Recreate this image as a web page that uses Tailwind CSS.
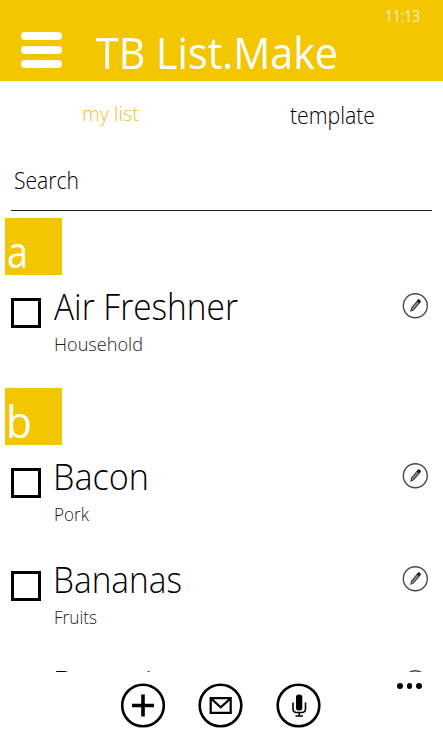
<!DOCTYPE html>
<html lang="en"><head><meta charset="utf-8"><title>TB List.Make</title>
<script src="https://cdn.jsdelivr.net/npm/@tailwindcss/browser@4"></script></head>
<body class="w-[443px] h-[738px] overflow-hidden bg-white text-black font-['Open_Sans',sans-serif] font-light">
<svg class="hidden"><symbol id="edit" viewBox="0 0 26 26"><circle cx="13.300" cy="12.800" r="12" fill="none" stroke="#4a4a4a" stroke-width="1.4"/><path d="M9 18 9.600 15 15.800 7.500 17.800 9.200 11.600 16.700z" fill="#999" stroke="#444" stroke-width="1.2"/><path d="m15.100 8.200 1.600-1.800 2 1.700-1.500 1.800z" fill="#222" stroke="#222"/></symbol></svg>
<div class="flex h-full flex-col">
<header class="h-[81px] shrink-0 bg-[#f2c600] text-white">
<div class="flex h-8 justify-end pr-[23px] text-[17px] leading-8 font-normal text-white/75"><span class="block w-[35px] whitespace-nowrap"><span data-w="35" class="inline-block origin-left">11:13</span></span></div>
<div class="flex items-start pl-[21px]">
<div class="flex w-[75px] shrink-0 flex-col gap-[6px]"><i class="block h-2 w-[41px] rounded-full bg-white"></i><i class="block h-2 w-[41px] rounded-full bg-white"></i><i class="block h-2 w-[41px] rounded-full bg-white"></i></div>
<h1 class="-mt-[1px] h-[42px] whitespace-nowrap text-[44px] leading-[42px] font-normal"><span data-w="242" class="inline-block origin-left">TB List.Make</span></h1></div>
</header>
<nav class="flex h-[68px] shrink-0 whitespace-nowrap leading-[66px]"><div class="w-[290px] pl-[82px] text-[20px] text-[#ecc51c]"><span data-w="57" class="inline-block origin-left">my list</span></div><div class="text-[23px] leading-[68px]"><span data-w="85" class="inline-block origin-left">template</span></div></nav>
<div class="mx-[11px] h-[62px] shrink-0 border-b border-[#222] pl-[3px] text-[23px] leading-[63px]"><span data-w="65" class="inline-block origin-left">Search</span></div>
<main class="min-h-0 h-[461px] shrink-0 overflow-hidden pt-[7px]">
<h2 class="ml-[5px] h-[57px] w-[57px] bg-[#f2c600] pl-[2px] pt-[4px] text-[43px] leading-[60px] font-normal text-white"><span data-w="21" class="inline-block origin-left">a</span></h2>
<article class="flex h-[113px] pl-[11px] pt-[23px]"><div class="h-[30px] w-[30px] shrink-0 border-3 border-black"></div><div class="-mt-[12px] ml-[13px] w-[348px] whitespace-nowrap"><h3 class="h-[42px] text-[37px] leading-[39px]"><span data-w="184" class="inline-block origin-left">Air Freshner</span></h3><p class="text-[19px] leading-[32px] text-[#222]"><span data-w="89" class="inline-block origin-left">Household</span></p></div><svg class="-mt-[5px] h-[26px] w-[26px]"><use href="#edit"/></svg></article>
<h2 class="ml-[5px] h-[57px] w-[57px] bg-[#f2c600] pl-[1px] pt-[4px] text-[43px] leading-[60px] font-normal text-white"><span data-w="26" class="inline-block origin-left">b</span></h2>
<article class="flex h-[103px] pl-[11px] pt-[23px]"><div class="h-[30px] w-[30px] shrink-0 border-3 border-black"></div><div class="-mt-[12px] ml-[12px] w-[349px] whitespace-nowrap"><h3 class="h-[42px] text-[37px] leading-[39px]"><span data-w="96" class="inline-block origin-left">Bacon</span></h3><p class="pl-px text-[19px] leading-[32px] text-[#222]"><span data-w="35" class="inline-block origin-left">Pork</span></p></div><svg class="-mt-[5px] h-[26px] w-[26px]"><use href="#edit"/></svg></article>
<article class="flex h-[104px] pl-[11px] pt-[23px]"><div class="h-[30px] w-[30px] shrink-0 border-3 border-black"></div><div class="-mt-[12px] ml-[12px] w-[349px] whitespace-nowrap"><h3 class="h-[42px] text-[37px] leading-[39px]"><span data-w="129" class="inline-block origin-left">Bananas</span></h3><p class="pl-px text-[19px] leading-[32px] text-[#222]"><span data-w="43" class="inline-block origin-left">Fruits</span></p></div><svg class="-mt-[5px] h-[26px] w-[26px]"><use href="#edit"/></svg></article>
<article class="flex h-[104px] pl-[11px] pt-[23px]"><div class="h-[30px] w-[30px] shrink-0 border-3 border-black"></div><div class="-mt-[12px] ml-[12px] w-[349px] whitespace-nowrap"><h3 class="h-[42px] text-[37px] leading-[39px]"><span data-w="131" class="inline-block origin-left">Brownies</span></h3></div><svg class="-mt-[5px] h-[26px] w-[26px]"><use href="#edit"/></svg></article>
</main>
<footer class="flex h-[66px] shrink-0 items-start bg-white pl-[120px] pt-[11px]">
<svg class="mr-[32px] h-[46px] w-[46px]" viewBox="0 0 46 46" fill="none" stroke="#000"><circle cx="23" cy="22.500" r="20.800" stroke-width="2.600"/><path d="M12 22.500h22M23 11.500v22" stroke-width="3.600"/></svg>
<svg class="mr-[32px] h-[46px] w-[46px]" viewBox="0 0 46 46" fill="none" stroke="#000"><circle cx="22.500" cy="22.500" r="20.800" stroke-width="2.600"/><path d="M12.700 15.200h20v14.600h-20zM13 15.500l9.700 8.800L32.500 15.500" stroke-width="2.200"/></svg>
<svg class="h-[46px] w-[46px]" viewBox="0 0 46 46" fill="none" stroke="#000"><circle cx="22.500" cy="22.500" r="20.800" stroke-width="2.600"/><rect x="20" y="11.500" width="6.300" height="16" rx="2.500" fill="#000" stroke="none"/><path d="M17 19.500v6q0 4 3.500 4h5.500q3.500 0 3.500-4v-6M23.250 29.500v3M19.500 33h7.500" stroke-width="1.600"/></svg>
<div class="ml-[75px] flex gap-[4px]"><i class="block h-[5.500px] w-[5.500px] rounded-full bg-black"></i><i class="block h-[5.500px] w-[5.500px] rounded-full bg-black"></i><i class="block h-[5.500px] w-[5.500px] rounded-full bg-black"></i></div>
</footer></div>
<script>
const fit=()=>document.querySelectorAll('[data-w]').forEach(e=>{e.style.transform='none';e.style.transform='scaleX('+(e.dataset.w/e.getBoundingClientRect().width)+')'});
addEventListener('load',fit);
document.fonts.ready.then(fit);
</script>
</body></html>
